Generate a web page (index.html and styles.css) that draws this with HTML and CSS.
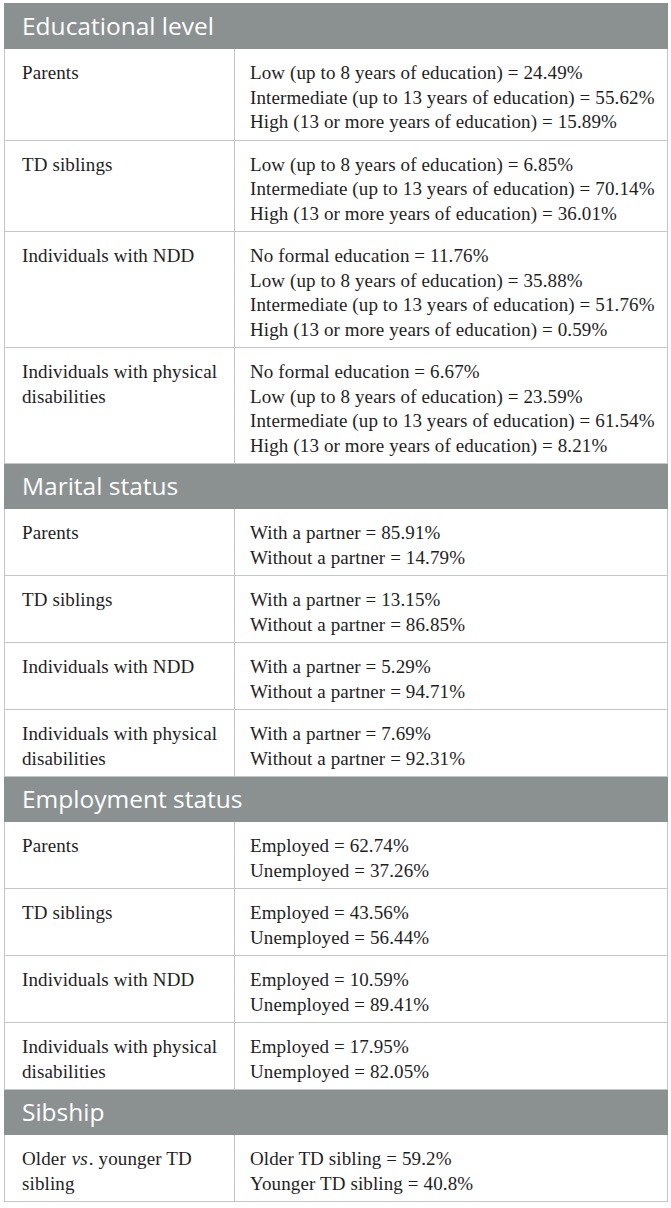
FILE: index.html
```html
<!DOCTYPE html>
<html lang="en">
<head>
<meta charset="utf-8">
<title>Demographics</title>
<link rel="stylesheet" href="styles.css">
</head>
<body>
<div class="wrap">
<table class="data">
  <colgroup><col class="c1"><col class="c2"></colgroup>
  <tbody>
    <tr class="sec"><th colspan="2">Educational level</th></tr>
    <tr><td>Parents</td><td>Low (up to 8 years of education) = 24.49%<br>Intermediate (up to 13 years of education) = 55.62%<br>High (13 or more years of education) = 15.89%</td></tr>
    <tr><td>TD siblings</td><td>Low (up to 8 years of education) = 6.85%<br>Intermediate (up to 13 years of education) = 70.14%<br>High (13 or more years of education) = 36.01%</td></tr>
    <tr><td>Individuals with NDD</td><td>No formal education = 11.76%<br>Low (up to 8 years of education) = 35.88%<br>Intermediate (up to 13 years of education) = 51.76%<br>High (13 or more years of education) = 0.59%</td></tr>
    <tr><td>Individuals with physical disabilities</td><td>No formal education = 6.67%<br>Low (up to 8 years of education) = 23.59%<br>Intermediate (up to 13 years of education) = 61.54%<br>High (13 or more years of education) = 8.21%</td></tr>
    <tr class="sec"><th colspan="2">Marital status</th></tr>
    <tr><td>Parents</td><td>With a partner = 85.91%<br>Without a partner = 14.79%</td></tr>
    <tr><td>TD siblings</td><td>With a partner = 13.15%<br>Without a partner = 86.85%</td></tr>
    <tr><td>Individuals with NDD</td><td>With a partner = 5.29%<br>Without a partner = 94.71%</td></tr>
    <tr><td>Individuals with physical disabilities</td><td>With a partner = 7.69%<br>Without a partner = 92.31%</td></tr>
    <tr class="sec"><th colspan="2">Employment status</th></tr>
    <tr><td>Parents</td><td>Employed = 62.74%<br>Unemployed = 37.26%</td></tr>
    <tr><td>TD siblings</td><td>Employed = 43.56%<br>Unemployed = 56.44%</td></tr>
    <tr><td>Individuals with NDD</td><td>Employed = 10.59%<br>Unemployed = 89.41%</td></tr>
    <tr><td>Individuals with physical disabilities</td><td>Employed = 17.95%<br>Unemployed = 82.05%</td></tr>
    <tr class="sec"><th colspan="2">Sibship</th></tr>
    <tr><td>Older <i class="em">vs</i>. younger TD<br>sibling</td><td>Older TD sibling = 59.2%<br>Younger TD sibling = 40.8%</td></tr>
  </tbody>
</table>
</div>
</body>
</html>
```
FILE: styles.css
```css
html, body {
  margin: 0;
  padding: 0;
  background: #ffffff;
}
.wrap {
  padding: 3px 4px 0 4px;
}
.data {
  width: 663px;
  border-collapse: collapse;
  table-layout: fixed;
  font-family: "Liberation Serif", "Times New Roman", serif;
  font-size: 19px;
  line-height: 24.5px;
  letter-spacing: 0.12px;
  color: #1e1e1e;
  border: 1.5px solid #b9bcbc;
}
.c1 { width: 230px; }
.c2 { width: 433px; }
.data td {
  border: 1px solid #c4c6c6;
  vertical-align: top;
  padding: 12px 12px 5px 17px;
}
.data td + td {
  padding-left: 15px;
}
.sec th {
  background: #8b9091;
  color: #ffffff;
  text-align: left;
  font-family: "Open Sans", "Noto Sans", sans-serif;
  font-weight: 400;
  font-size: 24.5px;
  letter-spacing: 0;
  line-height: 28px;
  padding: 8px 17px 8px 17px;
  height: 28px;
  border: 1px solid #8b9091;
}
.em {
  font-style: italic;
  margin: 0 1px;
}
```
